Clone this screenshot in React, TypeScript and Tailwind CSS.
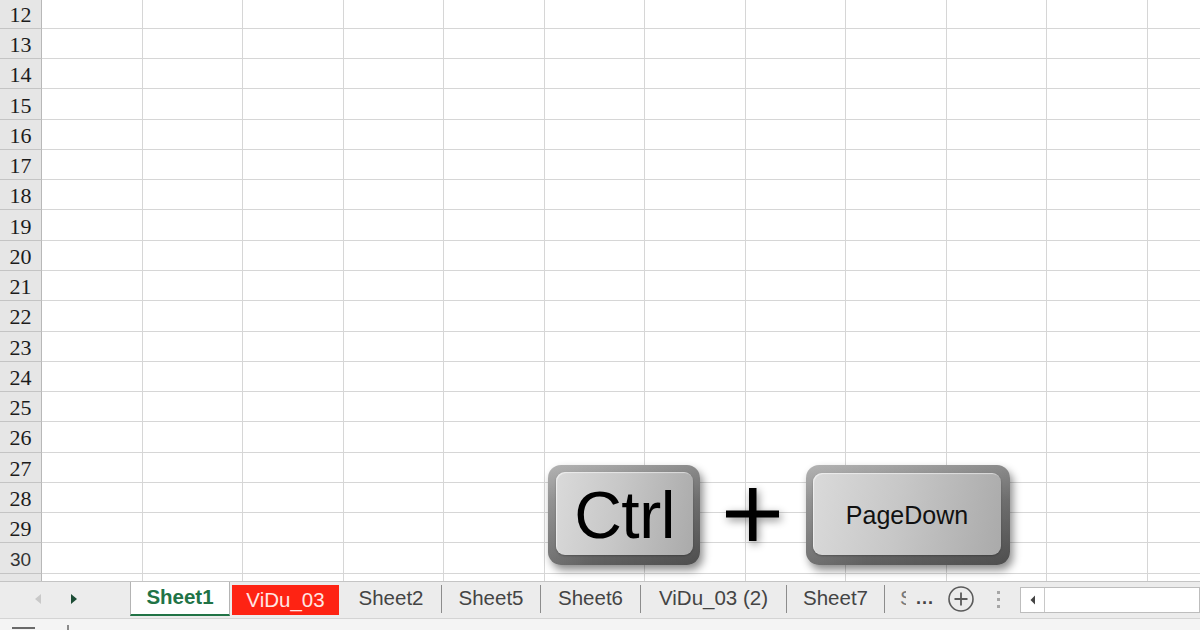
import React from "react";

const rows = Array.from({ length: 20 }, (_, i) => 12 + i);
const cols = Array.from({ length: 12 }, (_, i) => i);

function Key({ outer, face, children }: { outer: string; face: string; children: React.ReactNode }) {
  return (
    <div
      className={`absolute rounded-[13px] bg-[linear-gradient(180deg,#a9a9a9_0%,#858585_35%,#5f5f5f_100%)] shadow-[3px_5px_9px_rgba(0,0,0,0.45)] ${outer}`}
    >
      <div className="absolute inset-0 rounded-[13px] bg-[linear-gradient(90deg,rgba(255,255,255,0.12)_0%,rgba(0,0,0,0)_30%,rgba(0,0,0,0.18)_100%)]" />
      <div
        className={`absolute rounded-[9px] bg-[linear-gradient(100deg,#dadada_0%,#c7c7c7_45%,#aaaaaa_100%)] shadow-[inset_1px_1px_1px_rgba(255,255,255,0.55),0_1px_2px_rgba(0,0,0,0.25)] flex items-center justify-center ${face}`}
      >
        {children}
      </div>
    </div>
  );
}

export default function App() {
  return (
    <div className="w-[1200px] h-[630px] overflow-hidden relative bg-white flex flex-col font-['Liberation_Sans',Arial,sans-serif]">
      {/* grid */}
      <div className="h-[581px] overflow-hidden shrink-0">
        <div className="-mt-[1.4px]">
          {rows.map((r) => (
            <div key={r} className="flex h-[30.28px]">
              <div
                className={
                  r <= 29
                    ? "w-[42px] shrink-0 bg-[#e6e6e6] border-r border-b border-r-[#b8b8b8] border-b-[#c4c4c4] flex items-center justify-center pt-[3px] text-[22px] leading-none text-[#1c1c1c] font-['Liberation_Serif','Times_New_Roman',serif]"
                    : r === 30
                    ? "w-[42px] shrink-0 bg-[#e6e6e6] border-r border-b border-r-[#b8b8b8] border-b-[#c4c4c4] flex items-center justify-center pt-[2px] text-[19px] leading-none text-[#333333] font-['Liberation_Sans',Arial,sans-serif]"
                    : "w-[42px] shrink-0 bg-[#e6e6e6] border-r border-b border-r-[#b8b8b8] border-b-[#c4c4c4]"
                }
              >
                {r <= 30 ? r : ""}
              </div>
              {cols.map((c) => (
                <div key={c} className="w-[100.5px] shrink-0 border-r border-b border-[#d6d6d6]" />
              ))}
            </div>
          ))}
        </div>
      </div>

      {/* sheet tab bar */}
      <div className="h-[37px] shrink-0 bg-[#ececec] border-t border-[#c4c4c4] flex items-start text-[20.5px] leading-none">
        <div className="w-[130px] h-[33px] shrink-0 flex items-center">
          <svg width="8" height="12" viewBox="0 0 8 12" className="ml-[34px]">
            <path d="M7 1 L1 6 L7 11 Z" fill="#c9c9c9" />
          </svg>
          <svg width="8" height="12" viewBox="0 0 8 12" className="ml-[28px]">
            <path d="M1 1 L7 6 L1 11 Z" fill="#1d4d36" />
          </svg>
        </div>
        <div className="w-[100px] h-[34px] shrink-0 bg-white border-l border-r border-[#b4b4b4] border-b-2 border-b-[#217346] flex items-center justify-center font-bold text-[#217346] pb-[2px]">
          Sheet1
        </div>
        <div className="w-[107px] h-[30px] mt-[3px] ml-[2px] shrink-0 bg-[#fe2313] flex items-center justify-center text-[#ffe6e3]">
          ViDu_03
        </div>
        <div className="w-[100px] ml-[2px] h-[32px] shrink-0 flex items-center justify-center text-[#444444]">Sheet2</div>
        <div className="w-px h-[28px] mt-[3px] shrink-0 bg-[#8c8c8c]" />
        <div className="w-[98px] h-[32px] shrink-0 flex items-center justify-center text-[#444444]">Sheet5</div>
        <div className="w-px h-[28px] mt-[3px] shrink-0 bg-[#8c8c8c]" />
        <div className="w-[99px] h-[32px] shrink-0 flex items-center justify-center text-[#444444]">Sheet6</div>
        <div className="w-px h-[28px] mt-[3px] shrink-0 bg-[#8c8c8c]" />
        <div className="w-[145px] h-[32px] shrink-0 flex items-center justify-center text-[#444444]">ViDu_03 (2)</div>
        <div className="w-px h-[28px] mt-[3px] shrink-0 bg-[#8c8c8c]" />
        <div className="w-[97px] h-[32px] shrink-0 flex items-center justify-center text-[#444444]">Sheet7</div>
        <div className="w-px h-[28px] mt-[3px] shrink-0 bg-[#8c8c8c]" />
        <div className="w-[62px] h-[32px] shrink-0 flex items-center text-[#444444]">
          <span className="ml-[15px] w-[6px] overflow-hidden text-[#777777]">S</span>
          <span className="ml-[10px] text-[18px] font-bold tracking-[1px]">...</span>
        </div>
        <div className="h-[33px] shrink-0 flex items-center">
          <svg width="28" height="28" viewBox="0 0 28 28">
            <circle cx="14" cy="14" r="12" fill="none" stroke="#5a5a5a" strokeWidth="1.6" />
            <path d="M14 7.5 V20.5 M7.5 14 H20.5" stroke="#5a5a5a" strokeWidth="1.8" />
          </svg>
        </div>
        <div className="h-[33px] shrink-0 flex flex-col items-center justify-center gap-[4px] ml-[22px] pt-[2px]">
          <div className="w-[3px] h-[3px] bg-[#a6a6a6]" />
          <div className="w-[3px] h-[3px] bg-[#a6a6a6]" />
          <div className="w-[3px] h-[3px] bg-[#a6a6a6]" />
        </div>
        <div className="ml-[20px] mt-[5px] flex-1 h-[26px] bg-white border border-[#bdbdbd] flex">
          <div className="w-[24px] h-full border-r border-[#c8c8c8] flex items-center justify-center">
            <svg width="6" height="10" viewBox="0 0 6 10">
              <path d="M5 0.5 L0.5 5 L5 9.5 Z" fill="#444444" />
            </svg>
          </div>
        </div>
      </div>

      {/* status bar */}
      <div className="flex-1 bg-[#f4f4f4] border-t border-[#d4d4d4] flex items-start">
        <div className="ml-[12px] mt-[8px] w-[23px] h-[6px] border-t-2 border-[#6a6a6a]" />
        <div className="ml-[32px] mt-[6px] w-[2px] h-[6px] bg-[#8a8a8a]" />
      </div>

      {/* keys overlay */}
      <Key outer="left-[548px] top-[465px] w-[152px] h-[100px]" face="left-[8px] top-[7px] right-[7px] bottom-[10px]">
        <span className="text-[66px] leading-none text-black tracking-[-0.5px] mt-[2px]">Ctrl</span>
      </Key>

      <svg
        className="absolute left-[716px] top-[478px] drop-shadow-[2px_3px_4px_rgba(0,0,0,0.45)]"
        width="74"
        height="74"
        viewBox="0 0 74 74"
      >
        <rect x="33" y="10" width="7.5" height="53" fill="#000" />
        <rect x="10" y="32.5" width="53" height="7" fill="#000" />
      </svg>

      <Key outer="left-[806px] top-[465px] w-[204px] h-[100px]" face="left-[7px] top-[8px] right-[9px] bottom-[10px]">
        <span className="text-[25px] leading-none text-[#111111] mt-[2px]">PageDown</span>
      </Key>
    </div>
  );
}
